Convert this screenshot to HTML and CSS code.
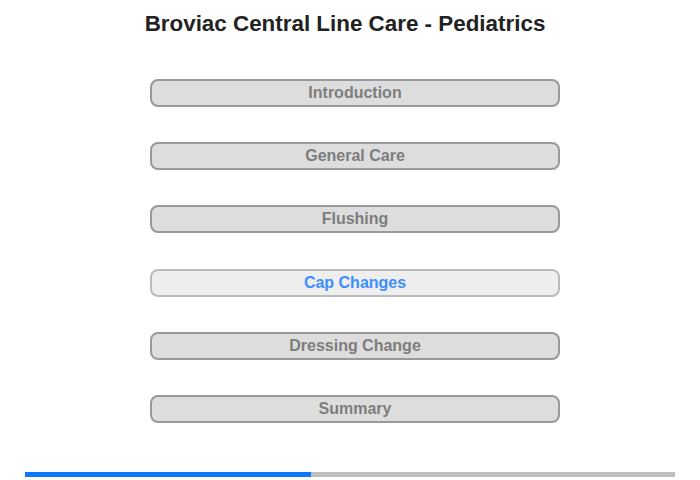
FILE: index.html
```html
<!DOCTYPE html>
<html>
<head>
<meta charset="utf-8">
<link rel="stylesheet" href="styles.css">
</head>
<body>
<div class="page">
  <h1 class="title">Broviac Central Line Care - Pediatrics</h1>
  <nav class="menu">
    <div class="item">Introduction</div>
    <div class="item">General Care</div>
    <div class="item">Flushing</div>
    <div class="item active">Cap Changes</div>
    <div class="item">Dressing Change</div>
    <div class="item">Summary</div>
  </nav>
  <div class="progress"><div class="fill" style="width:44%"></div></div>
</div>
</body>
</html>
```
FILE: styles.css
```css
html, body { margin: 0; padding: 0; background: #fff; }
body { font-family: "Liberation Sans", Arial, sans-serif; }
.page { width: 700px; height: 480px; display: flex; flex-direction: column; }
.title {
  margin: 11px 0 0 0;
  padding-right: 10px;
  font-size: 22.4px;
  line-height: 25px;
  font-weight: bold;
  color: #222;
  text-align: center;
}
.menu {
  display: flex;
  flex-direction: column;
  gap: 35.2px;
  margin: 43px 0 0 150px;
  width: 410px;
}
.item {
  box-sizing: border-box;
  height: 28px;
  border: 2px solid #999;
  border-radius: 8px;
  background: #dddddd;
  color: #7d7d7d;
  font-size: 16px;
  font-weight: bold;
  line-height: 24px;
  text-align: center;
}
.item.active {
  background: #eeeeee;
  border-color: #bbbbbb;
  color: #3d8eff;
}
.progress {
  margin: 49px 0 0 25px;
  width: 650px;
  height: 5px;
  background: #c0c0c0;
}
.fill { height: 100%; background: #0a7bff; }
```
